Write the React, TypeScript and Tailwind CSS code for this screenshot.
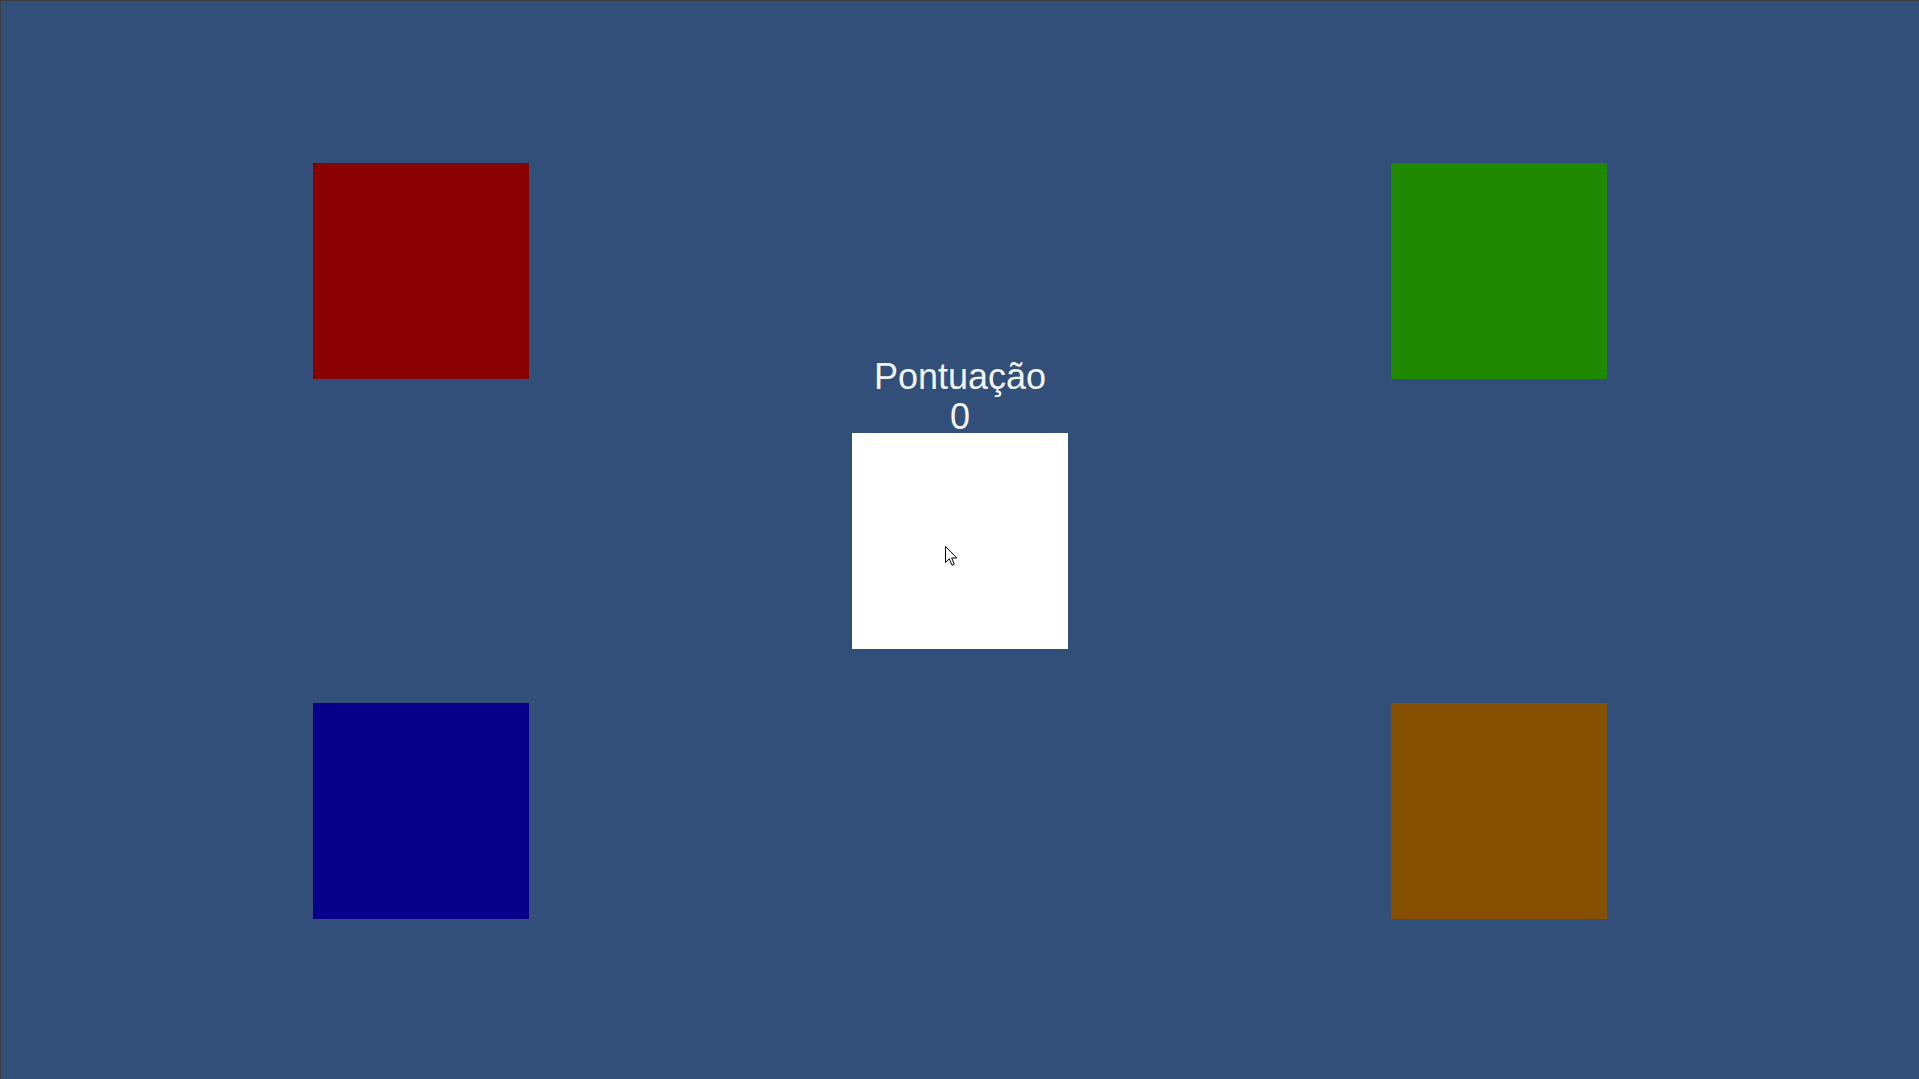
import { FC } from "react";

const Square: FC<{ color: string }> = ({ color }) => (
  <div className={`w-[216px] h-[216px] ${color}`} />
);

const Cursor: FC = () => (
  <svg width="13" height="21" viewBox="0 0 13 21" className="absolute left-[93px] top-[113px]">
    <path
      d="M0.5 0.5 L0.5 16.5 L4.3 12.8 L7 19.2 L9.3 18.2 L6.7 12 L11.8 12 Z"
      fill="#ffffff"
      stroke="#000000"
      strokeWidth="1"
      strokeLinejoin="miter"
    />
  </svg>
);

export default function App() {
  return (
    <div className="w-[1919px] h-[1079px] bg-[#324f7a] border-t border-l border-[#3c3c3c] overflow-hidden">
      <div className="grid grid-cols-[216px_216px_216px] grid-rows-[216px_216px_216px] gap-x-[323px] gap-y-[54px] pl-[312px] pt-[162px]">
        <Square color="bg-[#8a0000]" />
        <div />
        <Square color="bg-[#1e8800]" />

        <div />
        <div className="relative w-[216px] h-[216px] bg-white">
          <div
            className="absolute bottom-[212px] left-[-60px] right-[-60px] text-center text-[36px] leading-[40px] text-[#f4f4f4]"
            style={{ fontFamily: '"Liberation Sans", Arial, sans-serif' }}
          >
            <div>Pontuação</div>
            <div>0</div>
          </div>
          <Cursor />
        </div>
        <div />

        <Square color="bg-[#06008a]" />
        <div />
        <Square color="bg-[#855000]" />
      </div>
    </div>
  );
}
